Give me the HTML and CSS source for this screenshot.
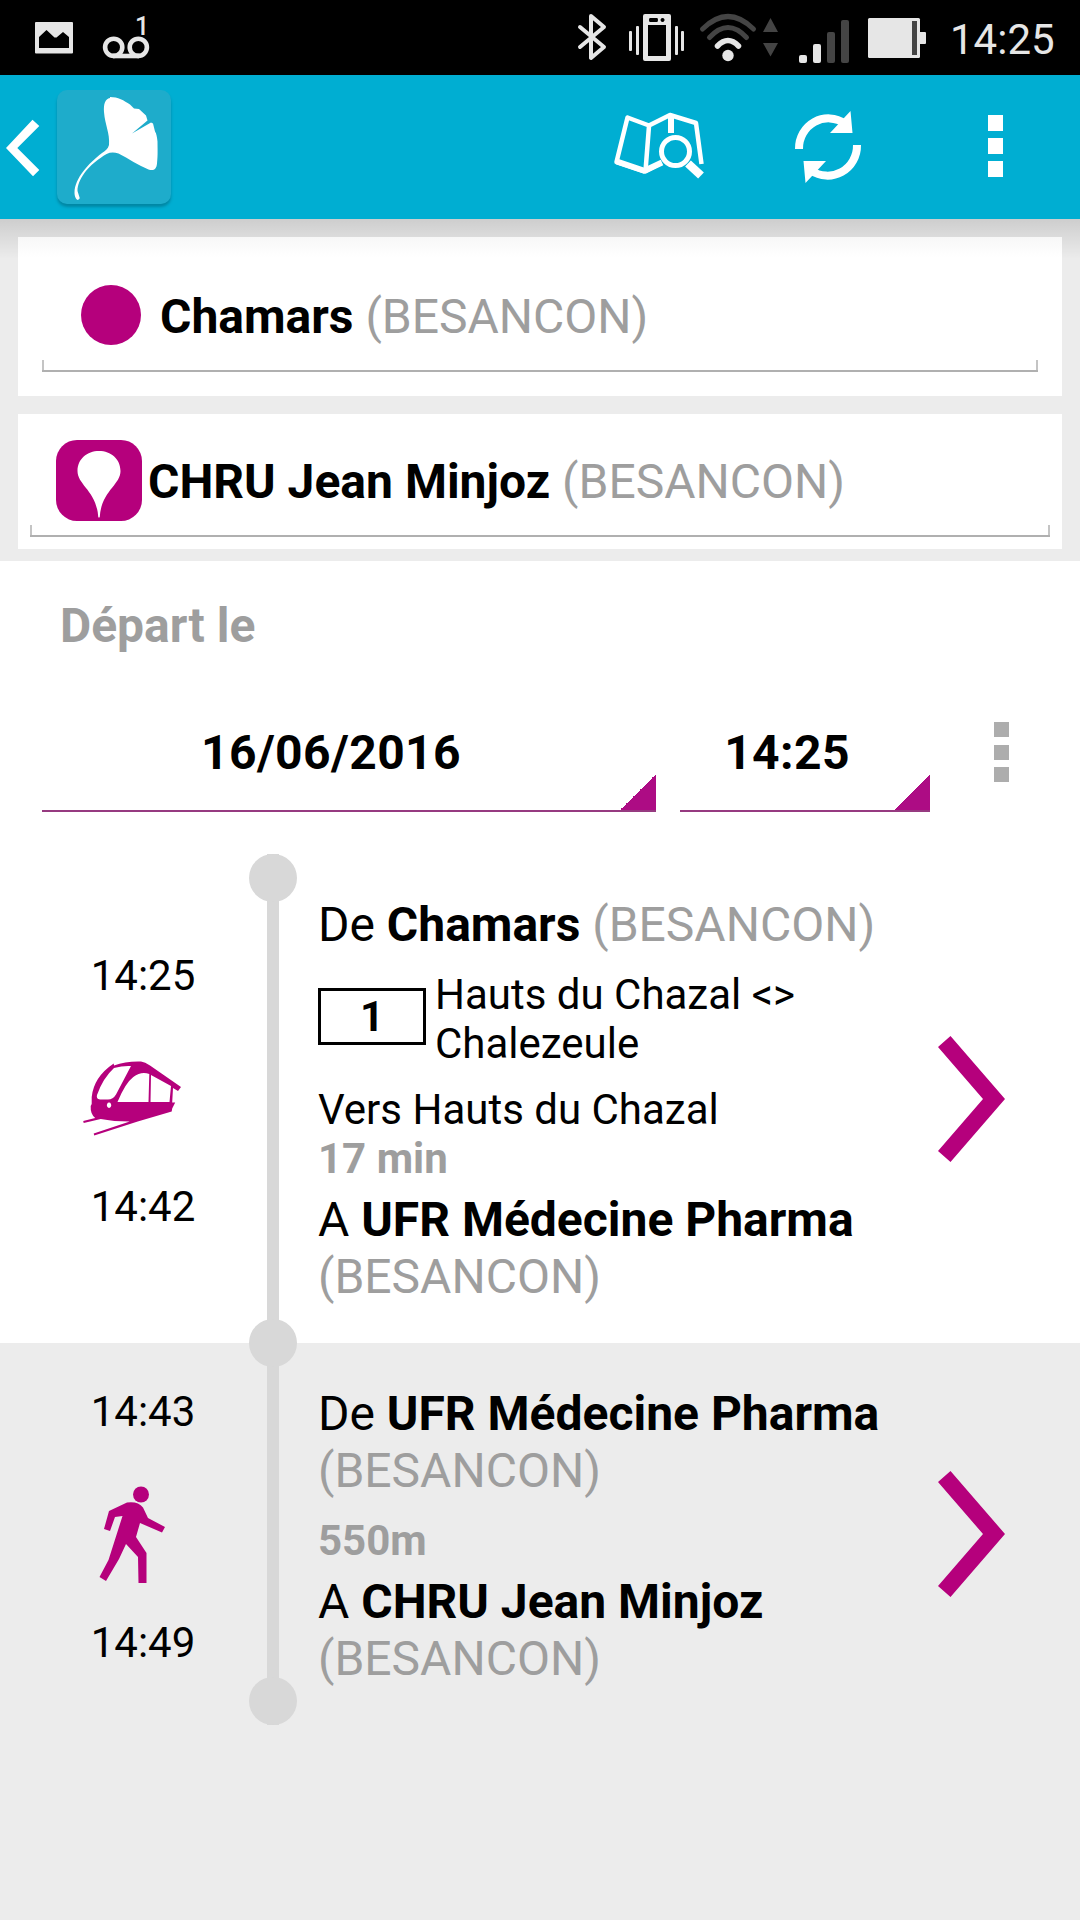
FILE: index.html
```html
<!DOCTYPE html>
<html lang="fr">
  <head>
    <meta charset="UTF-8" />
    <meta name="viewport" content="width=device-width, initial-scale=1.0" />
    <title>Ginko</title>
    <link rel="stylesheet" href="styles.css">
  </head>
  <body>
    <div class="status-bar">
      <svg class="status-left" width="120" height="75" viewBox="32 0 120 75">
        <path fill="#e6e6e6" fill-rule="evenodd" d="M36 22h36q1 0 1 1v29.500q0 1-1 1H36q-1 0-1-1V23q0-1 1-1zM39 48h30V37l-6-5-6.500 5.500h-2L46.500 30 39 37z" />
        <g fill="none" stroke="#e6e6e6" stroke-width="4.600">
          <circle cx="113.700" cy="47.300" r="8.600" />
          <circle cx="138.300" cy="47.300" r="8.600" />
          <path d="M113 56h26" />
        </g>
        <text class="voicemail-count" x="135" y="34.500">1</text>
      </svg>
      <svg class="status-right" width="352" height="75" viewBox="576 0 352 75">
        <path fill="none" stroke="#e6e6e6" stroke-width="4" stroke-linejoin="round" stroke-linecap="round" d="M580 27l24 20-13 11V16l13 11-24 20" />
        <g fill="#e6e6e6">
          <path fill-rule="evenodd" d="M645 14h24q2 0 2 2v43q0 2-2 2h-24q-2 0-2-2V16q0-2 2-2zM648 25v31h18V25zM650 18q-1 0-1 2t1 2h7q1 0 1-2t-1-2zM662.500 18a2 2 0 1 0 .1 0z" />
          <rect x="629" y="31" width="3" height="20" rx="1" />
          <rect x="636" y="26" width="3" height="29" rx="1" />
          <rect x="675" y="26" width="3" height="29" rx="1" />
          <rect x="681" y="31" width="3" height="20" rx="1" />
          <circle cx="728" cy="55.500" r="5.700" />
          <rect x="799" y="55" width="8" height="8" rx="2" />
          <rect x="813" y="44" width="8" height="19" rx="2" />
          <rect x="868" y="18" width="52" height="40" rx="1.500" />
          <rect x="919" y="32" width="7" height="12" rx="1" />
        </g>
        <g fill="none" stroke-width="5" stroke-linecap="round">
          <path stroke="#e6e6e6" stroke-width="5.500" d="M717.500 46q10.500-11 21 0" />
          <path stroke="#444" d="M709.500 37.500q18.500-20 37 0" />
          <path stroke="#444" d="M702.500 29q25.500-25 51 0" />
        </g>
        <g fill="#444">
          <path d="M770.500 18l7.500 14h-15zM770.500 56.500l7.500-13.500h-15z" />
          <rect x="827" y="32" width="8" height="31" rx="2" />
          <rect x="841" y="20" width="8" height="43" rx="2" />
          <rect x="912" y="21" width="5" height="34" />
        </g>
      </svg>
      <span class="clock">14:25</span>
    </div>
    <header>
      <svg class="back" width="34" height="58" viewBox="6 119 34 58">
        <path fill="#fff" d="M32.500 119.700l6.800 6.300-22 22 22 22-6.300 6.300L6 148z" />
      </svg>
      <div class="logo">
        <svg width="114" height="114" viewBox="56 89 114 114">
          <path fill="#fff" d="M109 97c-5 1-6.500 6-6 14 1 13 6 21 5 33-1 4-4 6-7 8-14 11-27 25-27.500 39.500 0 4 1.500 7 3.500 7.500l1.800-1.800-2.300-7.200c0-12 11-25 23-33 6-5 11-7 18-4.500 10 5 20 12 30 16 5 1.500 8 0 8.500-6 1-9 .500-15 .500-22-.500-4-1-8-2.500-10l-2-8-2-1-19 11 15.500-13-1.500-5-7-6.500-5-.500-4-4c-6-4-12-7.500-20-7.500z" />
        </svg>
      </div>
      <svg class="map" width="92" height="70" viewBox="613 113 92 70">
        <g fill="none" stroke="#fff" stroke-width="4.500" stroke-linejoin="round">
          <path d="M659 165l-14 7.500-28.500-9.500 11-44.500 21.500 8 21-10.500 26 8 5.500 41M649 127l-3.500 45" />
          <path stroke-width="6" d="M671 117v17M645 171.500l17-8M617 162.500l28 9.500" />
          <circle cx="675.500" cy="152.500" r="14" stroke-width="5" />
          <path stroke-width="8.500" stroke-linejoin="miter" d="M688 164.500l13 12" />
        </g>
      </svg>
      <svg class="refresh" width="68" height="74" viewBox="794 110 68 74">
        <g fill="none" stroke="#fff" stroke-width="8">
          <path d="M799 149A29.500 30 0 0 1 845 123.500" />
          <path d="M857 145A29.500 30 0 0 1 811 170.500" />
        </g>
        <path fill="#fff" d="M850.500 111l2 22h-22.500zM805.500 183l-2-22h22.500z" />
      </svg>
      <div class="dots"><i></i><i></i><i></i></div>
    </header>
    <main>
      <div class="places">
        <div class="card from">
          <div class="field">
            <span class="circle"></span>
            <p><b>Chamars</b> <span class="city">(BESANCON)</span></p>
          </div>
        </div>
        <div class="card to">
          <div class="field">
            <svg width="86" height="81" viewBox="0 0 86 81">
              <rect width="86" height="81" rx="21" fill="#b5007c" />
              <path fill="#fff" d="M43 11c-12 0-21.500 8-21.500 20 0 14 19 20 20.700 45.500 0 1.500 1.600 1.500 1.600 0C45.500 51 64.500 45 64.500 31c0-12-9.500-20-21.500-20z" />
            </svg>
            <p><b>CHRU Jean Minjoz</b> <span class="city">(BESANCON)</span></p>
          </div>
        </div>
      </div>
      <div class="departure">
        <p class="departure-label">Départ le</p>
        <div class="pickers">
          <div class="picker date">16/06/2016</div>
          <div class="picker time">14:25</div>
          <div class="dots"><i></i><i></i><i></i></div>
        </div>
      </div>
      <div class="leg">
        <div class="times">
          <span>14:25</span>
          <svg width="120" height="120" viewBox="72 1031 120 120">
            <path fill="#b5007c" fill-rule="evenodd" d="M114 1065.500q12-4.500 27-4q4 .500 9 4l31 21.500-3 4-5-3-.800 14.500h3l-3 6-.500 3-34 10-43.500 14-.500-2 36-12q-16 0-29-2.500l-17 4-.500-2 12-3q-5-4-4.500-12l1-2v-7q2-20 22-33.500zM114 1068q-11 10-17 27-1 4 3 4.500h8q5 0 8-5l15-28.500q-8-.500-17 2zM117.500 1102h31l.800-28q-8-3-16 3-8 6-15.800 25zM151 1075l-.500 27h19l1.500-16zM109 1102.500a2.200 2.700 0 1 0 .1 0z" />
          </svg>
          <span>14:42</span>
        </div>
        <div class="rail"></div>
        <div class="details">
          <p class="stop">De <b>Chamars</b> <span class="city">(BESANCON)</span></p>
          <div class="line">
            <span class="line-number">1</span>
            <span>Hauts du Chazal &lt;&gt; Chalezeule</span>
          </div>
          <p>Vers Hauts du Chazal</p>
          <p class="duration">17 min</p>
          <p class="stop">A <b>UFR Médecine Pharma</b> <span class="city">(BESANCON)</span></p>
        </div>
        <svg class="chevron" width="68" height="126" viewBox="0 0 68 126">
          <path fill="#b5007c" d="M12.500 0L67 63l-54.500 63L0 115l45-52L0 11z" />
        </svg>
      </div>
      <div class="leg walk">
        <div class="times">
          <span>14:43</span>
          <svg width="120" height="120" viewBox="72 1467 120 120">
            <circle cx="141" cy="1494.500" r="8" fill="#b5007c" />
            <path fill="#b5007c" d="M127 1502.500q11-1.500 16 5l5 10.500 17 9-3 5.500-22-9.500-4 14 10.500 16v30h-8l-.500-26-12-13-7 15-13 22-6.500-4 9-17 14-44-7.500 1-5 14-6-2 5-18z" />
          </svg>
          <span>14:49</span>
        </div>
        <div class="rail last"></div>
        <div class="details">
          <p class="stop">De <b>UFR Médecine Pharma</b> <span class="city">(BESANCON)</span></p>
          <p class="distance">550m</p>
          <p class="stop">A <b>CHRU Jean Minjoz</b> <span class="city">(BESANCON)</span></p>
        </div>
        <svg class="chevron" width="68" height="126" viewBox="0 0 68 126">
          <path fill="#b5007c" d="M12.500 0L67 63l-54.500 63L0 115l45-52L0 11z" />
        </svg>
      </div>
    </main>
  </body>
</html>
```
FILE: styles.css
```css
* {
  box-sizing: border-box;
  margin: 0;
}
body {
  width: 1080px;
  height: 1920px;
  overflow: hidden;
  background-color: #ececec;
  color: black;
  font-family: Roboto, "Liberation Sans", sans-serif;
  font-size: 42px;
  line-height: 49px;
}
svg {
  display: block;
  flex-shrink: 0;
}
.status-bar {
  display: flex;
  height: 75px;
  padding-left: 32px;
  background-color: black;
  color: #e6e6e6;
}
.status-right {
  margin-left: 424px;
}
.voicemail-count {
  fill: #e6e6e6;
  font-size: 25px;
  font-weight: 500;
}
.clock {
  margin-left: 22px;
  padding-top: 15px;
}
header {
  display: flex;
  align-items: center;
  height: 144px;
  padding-left: 6px;
  background-color: #00aed2;
}
.back {
  margin-top: 2px;
}
.logo {
  margin-left: 17px;
  border-radius: 10px;
  background-color: #1eaccb;
  box-shadow: 0 3px 3px #0087a4;
}
.map {
  margin-left: 442px;
}
.refresh {
  margin-left: 89px;
}
.dots {
  display: grid;
  gap: 7px;
}
.dots i {
  width: 15px;
  height: 16px;
  background-color: white;
}
header .dots {
  margin-left: 126px;
  margin-top: -2px;
}
.places {
  display: grid;
  gap: 18px;
  height: 342px;
  padding: 18px 18px 12px;
  grid-template-rows: 159px 135px;
  background: linear-gradient(rgba(0, 0, 0, 0.13), transparent 40px);
}
.card {
  background-color: white;
}
.from {
  padding: 48px 24px 24px;
  background: linear-gradient(#f7f7f7, white 20px);
}
.to {
  padding: 26px 12px 12px;
}
/* thin underline with a short tick at each end */
.field {
  display: flex;
  height: 87px;
  background:
    linear-gradient(#b0b0b0, #b0b0b0) left bottom / 100% 2px no-repeat,
    linear-gradient(#c4c4c4, #c4c4c4) left bottom / 2px 12px no-repeat,
    linear-gradient(#c4c4c4, #c4c4c4) right bottom / 2px 12px no-repeat;
  font-size: 48px;
  line-height: 57px;
}
.to .field {
  height: 97px;
}
.from .field {
  padding-left: 39px;
}
.from p {
  padding: 3px 0 0 19px;
}
.to .field {
  padding-left: 26px;
}
.to p {
  padding: 13px 0 0 6px;
}
.circle {
  width: 60px;
  height: 60px;
  border-radius: 50%;
  background-color: #b5007c;
}
.city {
  color: #9e9e9e;
}
.departure {
  height: 293px;
  padding: 36px 0 0 42px;
  background-color: white;
  font-size: 48px;
  font-weight: bold;
  line-height: 57px;
}
.departure-label {
  padding-left: 18px;
  color: #9e9e9e;
}
.pickers {
  display: flex;
  gap: 24px;
  margin-top: 70px;
}
.picker {
  height: 88px;
  padding-right: 36px;
  border-bottom: 2px solid #963a80;
  background: linear-gradient(135deg, transparent 50%, #ad0c84 50%) right bottom / 36px 36px no-repeat;
  letter-spacing: 0.4px;
  text-align: center;
}
.date {
  width: 614px;
}
.time {
  width: 250px;
}
.pickers .dots {
  align-content: start;
  gap: 7.5px;
  margin: -2px 0 0 40px;
}
.pickers .dots i {
  height: 15px;
  background-color: #adadad;
}
.leg {
  display: grid;
  grid-template-columns: 249px 48px 641px 68px;
  background-color: white;
}
.walk {
  background-color: #ececec;
}
.times {
  display: flex;
  flex-direction: column;
  align-items: center;
  align-self: center;
  gap: 31px;
  padding: 0 0 15px 37px;
}
.times svg {
  margin-right: 22px;
}
.rail {
  position: relative;
  background: linear-gradient(#d8d8d8, #d8d8d8) center / 12px 100% no-repeat;
}
.rail::before,
.last::after {
  content: "";
  position: absolute;
  top: -24px;
  left: 0;
  width: 48px;
  height: 48px;
  border-radius: 50%;
  background-color: #d8d8d8;
}
.leg:not(.walk) .rail::before {
  top: 0;
}
.last::after {
  top: auto;
  bottom: 0;
}
.details {
  padding: 42px 0 38px 21px;
}
.stop {
  font-size: 48px;
  line-height: 57px;
}
.line {
  display: flex;
  align-items: center;
  gap: 9px;
  margin: 17px 0;
}
.line-number {
  width: 108px;
  height: 57px;
  flex-shrink: 0;
  margin-bottom: 5px;
  border: 3px solid black;
  font-weight: bold;
  line-height: 52px;
  text-align: center;
}
.duration,
.distance {
  margin-bottom: 8px;
  color: #9e9e9e;
  font-weight: bold;
}
.distance {
  margin-top: 17px;
}
.chevron {
  align-self: center;
}
```
